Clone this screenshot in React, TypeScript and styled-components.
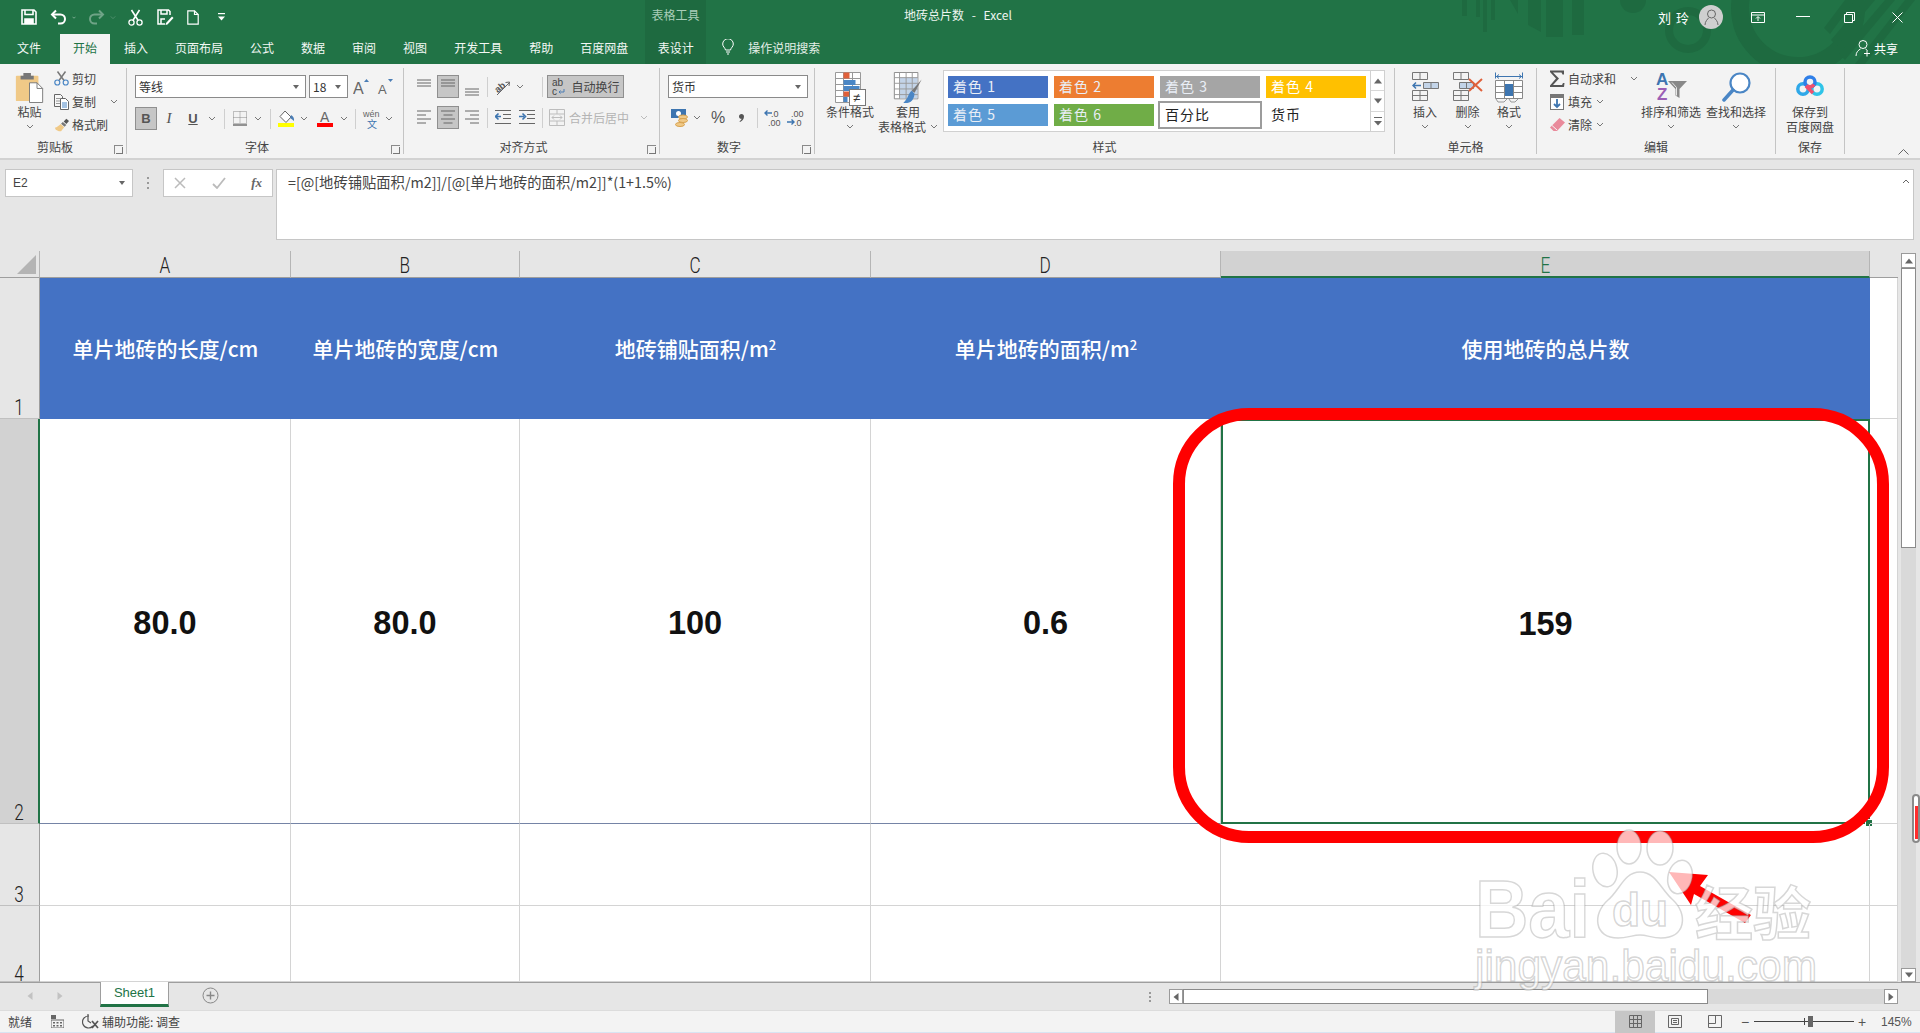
import React from 'react';
import styled, { createGlobalStyle } from 'styled-components';

const GlobalStyle = createGlobalStyle`
  html, body { margin: 0; padding: 0; background: #fff; }
  body { font-family: "Noto Sans CJK SC", "Liberation Sans", sans-serif; font-size: 12px; color: #444; }
  * { box-sizing: border-box; }
  svg { display: block; }
`;

const Page = styled.div`
  position: relative;
  width: 1920px;
  height: 1033px;
  overflow: hidden;
  display: flex;
  flex-direction: column;
  background: #e6e6e6;
`;

/* ---------- title bar and tabs ---------- */

const Header = styled.header`
  position: relative;
  height: 64px;
  background: #217346;
  color: #fff;
`;

const HeaderArt = styled.svg`
  position: absolute;
  left: 0;
  top: 0;
`;

const TitleRow = styled.div`
  position: relative;
  height: 34px;
  display: flex;
  align-items: center;
`;

const QuickAccess = styled.div`
  width: 645px;
  height: 34px;
  padding-left: 13px;
  display: flex;
  align-items: center;
`;

const Slot = styled.span<{ $w: number; $dim?: boolean }>`
  width: ${p => p.$w}px;
  flex: none;
  display: flex;
  align-items: center;
  justify-content: center;
  opacity: ${p => (p.$dim ? 0.35 : 1)};
`;

const ContextLabel = styled.div`
  width: 61px;
  height: 34px;
  line-height: 30px;
  text-align: center;
  background: #1e6a40;
  color: #a9cdb9;
  font-size: 12px;
`;

const WindowTitle = styled.div`
  padding-left: 198px;
  flex: 1;
  font-size: 12px;
  line-height: 30px;
  height: 34px;
  word-spacing: 5px;
  color: #eef5f0;
`;

const WindowControls = styled.div`
  display: flex;
  align-items: center;
  height: 34px;
  padding-right: 17px;
`;

const UserName = styled.span`
  font-size: 13px;
  letter-spacing: 1px;
  margin-right: 9px;
`;

const Avatar = styled.span`
  width: 24px;
  height: 24px;
  border-radius: 50%;
  background: #cfcfcf;
  display: flex;
  align-items: center;
  justify-content: center;
  margin-right: 28px;
`;

const TabRow = styled.nav`
  position: relative;
  height: 30px;
  display: flex;
  align-items: stretch;
  padding-left: 4px;
`;

const Tab = styled.div<{ $active?: boolean; $gap?: number }>`
  padding: 0 13px;
  margin-right: ${p => p.$gap ?? 1}px;
  line-height: 28px;
  font-size: 12px;
  white-space: nowrap;
  background: ${p => (p.$active ? '#f3f3f3' : 'transparent')};
  color: ${p => (p.$active ? '#217346' : '#f3f8f5')};
`;

const ContextTab = styled.div`
  width: 61px;
  margin-left: 3px;
  line-height: 28px;
  text-align: center;
  background: #1e6a40;
  color: #f3f8f5;
`;

const SearchHint = styled.div`
  display: flex;
  align-items: center;
  height: 26px;
  margin-left: 16px;
  gap: 14px;
  color: #e4efe8;
`;

const ShareButton = styled.div`
  position: absolute;
  right: 22px;
  top: 0;
  height: 28px;
  display: flex;
  align-items: center;
  gap: 3px;
  color: #fff;
`;

/* ---------- ribbon ---------- */

const Ribbon = styled.section`
  position: relative;
  height: 96px;
  padding-top: 4px;
  display: flex;
  background: #f3f3f3;
  border-bottom: 2px solid #d2d2d2;
`;

const Group = styled.div<{ $w: number; $end?: boolean }>`
  position: relative;
  width: ${p => p.$w}px;
  height: 86px;
  display: flex;
  flex-direction: column;
  border-right: ${p => (p.$end ? 'none' : '1px solid #c4c4c4')};
`;

const GroupBody = styled.div<{ $pad?: number; $column?: boolean; $top?: number }>`
  height: 70px;
  padding-left: ${p => p.$pad ?? 0}px;
  padding-top: ${p => p.$top ?? 0}px;
  display: flex;
  flex-direction: ${p => (p.$column ? 'column' : 'row')};
`;

const GroupLabel = styled.div<{ $launcher?: boolean }>`
  height: 16px;
  line-height: 17px;
  text-align: center;
  font-size: 12px;
  color: #444;
  padding-right: ${p => (p.$launcher ? 16 : 0)}px;
`;

const Launcher = styled.span`
  position: absolute;
  right: 3px;
  bottom: 0;
  width: 9px;
  height: 9px;
  border-left: 1px solid #8a8a8a;
  border-top: 1px solid #8a8a8a;
  &::after {
    content: '';
    position: absolute;
    left: 1px;
    top: 1px;
    width: 6px;
    height: 6px;
    border-right: 1px solid #777;
    border-bottom: 1px solid #777;
  }
`;

const ToolRow = styled.div<{ $mt?: number; $h?: number }>`
  height: ${p => p.$h ?? 23}px;
  margin-top: ${p => p.$mt ?? 0}px;
  display: flex;
  align-items: center;
  color: #444;
  white-space: nowrap;
`;

const PressedButton = styled.span<{ $w: number; $ml?: number }>`
  width: ${p => p.$w}px;
  height: 23px;
  flex: none;
  margin-left: ${p => p.$ml ?? 0}px;
  display: flex;
  align-items: center;
  justify-content: center;
  gap: 5px;
  background: #c6c6c6;
  border: 1px solid #8f8f8f;
  color: #444;
`;

const Separator = styled.span`
  width: 1px;
  height: 20px;
  flex: none;
  background: #cfcfcf;
`;

const ComboBox = styled.div<{ $w: number; $ml?: number }>`
  width: ${p => p.$w}px;
  height: 23px;
  flex: none;
  margin-left: ${p => p.$ml ?? 0}px;
  padding: 0 6px 0 3px;
  display: flex;
  align-items: center;
  justify-content: space-between;
  background: #fff;
  border: 1px solid #8a8a8a;
  font-size: 12px;
  color: #333;
`;

const DownCaret = styled.span`
  width: 0;
  height: 0;
  border-left: 3.5px solid transparent;
  border-right: 3.5px solid transparent;
  border-top: 4px solid #666;
`;

const BigButton = styled.div<{ $w: number; $ml?: number }>`
  width: ${p => p.$w}px;
  flex: none;
  margin-left: ${p => p.$ml ?? 0}px;
  display: flex;
  flex-direction: column;
  align-items: center;
  color: #444;
`;

const BigIcon = styled.div<{ $top?: number }>`
  height: 36px;
  padding-top: ${p => p.$top ?? 4}px;
  display: flex;
  align-items: flex-start;
  justify-content: center;
`;

const BigLine = styled.div`
  height: 15px;
  line-height: 15px;
  display: flex;
  align-items: center;
  gap: 4px;
  white-space: nowrap;
`;

const ToolColumn = styled.div<{ $w: number; $ml?: number }>`
  width: ${p => p.$w}px;
  flex: none;
  margin-left: ${p => p.$ml ?? 0}px;
  margin-top: -1px;
  display: flex;
  flex-direction: column;
`;

const DimText = styled.span`
  color: #b4b4b4;
  margin-left: 4px;
  width: 60px;
`;

const Glyph = styled.span<{ $italic?: boolean; $under?: boolean; $size?: number; $serif?: boolean }>`
  font-family: ${p => (p.$serif ? '"Liberation Serif"' : '"Liberation Sans"')}, sans-serif;
  font-size: ${p => p.$size ?? 14}px;
  font-style: ${p => (p.$italic ? 'italic' : 'normal')};
  font-weight: ${p => (p.$under ? 700 : 400)};
  text-decoration: ${p => (p.$under ? 'underline' : 'none')};
  color: #555;
`;

const Gallery = styled.div`
  width: 428px;
  height: 62px;
  margin: 2px 0 0 12px;
  padding: 5px 4px;
  display: grid;
  grid-template-columns: repeat(4, 100px);
  grid-auto-rows: 22px;
  gap: 6px;
  background: #fff;
  border: 1px solid #d0d0d0;
`;

const StyleCell = styled.div<{ $bg?: string; $fg?: string; $framed?: boolean }>`
  background: ${p => p.$bg ?? 'transparent'};
  color: ${p => p.$fg ?? '#e9eef6'};
  font-size: 14px;
  line-height: 20px;
  padding-left: 5px;
  letter-spacing: 1px;
  white-space: nowrap;
  ${p => p.$framed && `
    color: #222;
    margin: -3px -2px;
    line-height: 22px;
    border: 2px solid #9c9c9c;
    box-shadow: inset 0 0 0 1px #fff;
    padding-left: 5px;
  `}
`;

const GalleryScroll = styled.div`
  width: 14px;
  height: 62px;
  margin-top: 2px;
  display: flex;
  flex-direction: column;
  background: #fff;
  border: 1px solid #d0d0d0;
  border-left: none;
`;

const GalleryArrow = styled.div`
  flex: 1;
  display: flex;
  align-items: center;
  justify-content: center;
  border-bottom: 1px solid #d8d8d8;
  &:last-child { border-bottom: none; }
`;

const CollapseRibbon = styled.span`
  position: absolute;
  right: 11px;
  bottom: 3px;
`;

/* ---------- formula bar ---------- */

const FormulaBar = styled.section`
  height: 91px;
  padding: 9px 6px 0 5px;
  display: flex;
  align-items: flex-start;
  background: #e6e6e6;
`;

const NameBox = styled.div`
  width: 128px;
  height: 28px;
  padding: 0 7px;
  display: flex;
  align-items: center;
  justify-content: space-between;
  background: #fff;
  border: 1px solid #c6c6c6;
  font-family: "Liberation Sans", sans-serif;
  font-size: 12px;
  color: #444;
`;

const BarDots = styled.div`
  width: 30px;
  height: 28px;
  display: flex;
  flex-direction: column;
  align-items: center;
  justify-content: center;
  gap: 3px;
  & > i { width: 2px; height: 2px; background: #999; }
`;

const FxBox = styled.div`
  width: 110px;
  height: 28px;
  padding: 0 10px;
  display: flex;
  align-items: center;
  justify-content: space-between;
  background: #fff;
  border: 1px solid #c6c6c6;
`;

const FxLabel = styled.span`
  font-family: "Liberation Serif", serif;
  font-style: italic;
  font-weight: 700;
  font-size: 13px;
  color: #666;
`;

const FormulaInput = styled.div`
  position: relative;
  flex: 1;
  margin-left: 3px;
  height: 71px;
  padding: 3px 11px;
  background: #fff;
  border: 1px solid #c6c6c6;
  font-size: 14.3px;
  line-height: 18px;
  color: #444;
  & > svg { position: absolute; right: 3px; top: 9px; }
`;

/* ---------- sheet ---------- */

const Workspace = styled.section`
  display: flex;
  height: 731px;
`;

const SheetGrid = styled.div`
  width: 1898px;
  display: grid;
  grid-template-columns: 40px 251px 229px 351px 350px 649px 28px;
  grid-template-rows: 27px 141px 405px 82px 76px;
  background: #fff;
  border-right: 1px solid #9e9e9e;
`;

const Corner = styled.div`
  background: #e6e6e6;
  border-right: 1px solid #b5b5b5;
  border-bottom: 1px solid #9e9e9e;
  padding: 4px 0 0 17px;
`;

const HeadLetter = styled.span<{ $drop?: number }>`
  display: inline-block;
  font-family: "Roboto", sans-serif;
  font-weight: 300;
  font-size: 22px;
  line-height: 20px;
  transform: translateY(${p => p.$drop ?? 0}px) scaleX(0.78);
`;

const ColHead = styled.div<{ $selected?: boolean; $plain?: boolean }>`
  display: flex;
  align-items: center;
  justify-content: center;
  padding-top: 4px;
  color: ${p => (p.$selected ? '#217346' : '#222')};
  background: ${p => (p.$selected ? '#d2d2d2' : '#e6e6e6')};
  border-right: ${p => (p.$plain ? 'none' : '1px solid #b5b5b5')};
  border-bottom: ${p => (p.$selected ? '2px solid #217346' : '1px solid #9e9e9e')};
`;

const RowHead = styled.div<{ $selected?: boolean }>`
  display: flex;
  align-items: flex-end;
  justify-content: center;
  color: #222;
  background: ${p => (p.$selected ? '#d2d2d2' : '#e6e6e6')};
  border-right: ${p => (p.$selected ? '2px solid #217346' : '1px solid #9e9e9e')};
  border-bottom: 1px solid #c0c0c0;
`;

const TableHead = styled.div`
  display: flex;
  align-items: center;
  justify-content: center;
  padding-bottom: 2px;
  background: #4472c4;
  color: #fff;
  font-size: 21px;
  font-weight: 500;
  white-space: nowrap;
  & sup { font-size: 13px; line-height: 0; position: relative; top: -3px; }
`;

const Cell = styled.div<{ $tableEnd?: boolean }>`
  position: relative;
  display: flex;
  align-items: center;
  justify-content: center;
  padding-top: 5px;
  border-right: 1px solid #d4d4d4;
  border-bottom: 1px solid ${p => (p.$tableEnd ? '#7584a6' : '#d4d4d4')};
  font-family: "Liberation Sans", sans-serif;
  font-weight: 700;
  font-size: 32.5px;
  color: #111;
`;

const ActiveCell = styled(Cell)`
  border: 2px solid #217346;
`;

const FillHandle = styled.span`
  position: absolute;
  right: -5px;
  bottom: -5px;
  width: 8px;
  height: 8px;
  background: #217346;
  border: 1px solid #fff;
`;

const VScroll = styled.div`
  width: 22px;
  padding: 2px 2px 0 3px;
  display: flex;
  flex-direction: column;
  background: #e6e6e6;
`;

const ScrollButton = styled.div<{ $w?: number; $h?: number }>`
  width: ${p => p.$w ?? 15}px;
  height: ${p => p.$h ?? 15}px;
  flex: none;
  display: flex;
  align-items: center;
  justify-content: center;
  background: #fff;
  border: 1px solid #9a9a9a;
`;

const VThumb = styled.div`
  width: 15px;
  height: 280px;
  flex: none;
  background: #fff;
  border: 1px solid #8a8a8a;
`;

const VTrack = styled.div`
  flex: 1;
  width: 15px;
  background: #d9d9d9;
`;

const SheetBar = styled.section`
  height: 28px;
  display: flex;
  align-items: flex-start;
  background: #e6e6e6;
  border-top: 1px solid #9e9e9e;
`;

const TabNav = styled.div`
  width: 100px;
  height: 26px;
  padding-left: 26px;
  display: flex;
  align-items: center;
  gap: 22px;
`;

const SheetTab = styled.div`
  width: 69px;
  height: 25px;
  margin-top: -1px;
  text-align: center;
  line-height: 22px;
  font-family: "Liberation Sans", sans-serif;
  font-size: 13px;
  color: #217346;
  background: #fff;
  border-left: 1px solid #9e9e9e;
  border-right: 1px solid #9e9e9e;
  border-bottom: 3px solid #217346;
`;

const AddSheet = styled.div`
  margin: 4px 0 0 33px;
`;

const HScrollArea = styled.div`
  margin-left: auto;
  width: 767px;
  height: 15px;
  margin-top: 6px;
  margin-right: 22px;
  display: flex;
  align-items: center;
`;

const HDots = styled(BarDots)`
  width: 38px;
  height: 15px;
  gap: 2px;
`;

const HThumb = styled.div`
  width: 525px;
  height: 15px;
  background: #fff;
  border: 1px solid #8a8a8a;
`;

const HTrack = styled.div`
  flex: 1;
  height: 15px;
  background: #d9d9d9;
`;

const StatusBar = styled.footer`
  height: 23px;
  padding-left: 8px;
  display: flex;
  align-items: center;
  background: #f3f3f3;
  border-top: 1px solid #dcdcdc;
  border-bottom: 1px solid #d8e4f2;
  color: #444;
  white-space: nowrap;
`;

const StatusRight = styled.div`
  margin-left: auto;
  display: flex;
  align-items: center;
  height: 22px;
`;

const ViewButton = styled.div<{ $active?: boolean }>`
  width: 40px;
  height: 22px;
  display: flex;
  align-items: center;
  justify-content: center;
  background: ${p => (p.$active ? '#c6c6c6' : 'transparent')};
`;

const ZoomTrack = styled.div`
  position: relative;
  width: 100px;
  height: 1px;
  margin: 0 2px 0 3px;
  background: #444;
  & > i { position: absolute; left: 50px; top: -3px; width: 1px; height: 7px; background: #444; }
  & > b { position: absolute; left: 54px; top: -5px; width: 5px; height: 11px; background: #666; }
`;

const ZoomSign = styled.span`
  width: 12px;
  text-align: center;
  font-family: "Liberation Sans", sans-serif;
  font-size: 14px;
  color: #555;
`;

const ZoomValue = styled.span`
  width: 52px;
  padding-left: 13px;
  font-family: "Liberation Sans", sans-serif;
  font-size: 12px;
  color: #555;
`;

/* ---------- things drawn over the sheet ---------- */

const RedFrame = styled.div`
  position: absolute;
  left: 1173px;
  top: 408px;
  width: 716px;
  height: 435px;
  border: 12px solid #ff0000;
  border-radius: 76px;
  pointer-events: none;
`;

const ScrollMark = styled.div`
  position: absolute;
  left: 1912px;
  top: 794px;
  width: 8px;
  height: 49px;
  padding: 10px 0.5px 2px;
  background: #fff;
  border: 2px solid #8a8a8a;
  border-radius: 4px;
  &::after {
    content: '';
    display: block;
    height: 100%;
    background: #ff2d2d;
  }
`;

const Overlay = styled.svg`
  position: absolute;
  left: 1460px;
  top: 820px;
  pointer-events: none;
`;

/* ---------- icons ---------- */

const Chev = ({ c = '#777' }: { c?: string }) => (
  <svg width="8" height="5" viewBox="0 0 8 5"><path d="M1 1l3 3 3-3" fill="none" stroke={c} strokeWidth="1" /></svg>
);

const QatSave = () => (
  <svg width="16" height="16" viewBox="0 0 16 16" fill="none" stroke="#fff" strokeWidth="1.6">
    <path d="M1 1h12l2 2v12H1z" /><path d="M4 1v4.5h8V1" /><path d="M4 15v-5h8v5" fill="#fff" />
  </svg>
);
const QatUndo = ({ flip }: { flip?: boolean }) => (
  <svg width="17" height="16" viewBox="0 0 17 16" fill="none" stroke="#fff" strokeWidth="2" transform={flip ? 'scale(-1,1)' : undefined}>
    <path d="M6 1.5 2 5.5l4 4" /><path d="M2.5 5.5h8a4.5 4.5 0 0 1 0 9H8" />
  </svg>
);
const QatCut = () => (
  <svg width="15" height="17" viewBox="0 0 15 17" fill="none" stroke="#fff" strokeWidth="1.3">
    <circle cx="3.5" cy="13.5" r="2.6" /><circle cx="11.5" cy="13.5" r="2.6" />
    <path d="M5 11.3 11.5 1M10 11.3 3.5 1" strokeWidth="1.6" />
  </svg>
);
const QatSaveAs = () => (
  <svg width="17" height="16" viewBox="0 0 17 16" fill="none" stroke="#fff" strokeWidth="1.5">
    <path d="M8 15H1V1h10.5L13 2.5V6" /><path d="M4 1v4h6V1" /><path d="M4 15v-5h4" />
    <path d="M9 14l6-6.5 1.5 1.5-6 6.5-2 .5z" fill="#fff" stroke="none" />
  </svg>
);
const QatNew = () => (
  <svg width="12" height="15" viewBox="0 0 12 15" fill="none" stroke="#fff" strokeWidth="1.2">
    <path d="M.8.8h6.7l3.7 3.7v9.7H.8z" /><path d="M7.5.8v3.7h3.7" />
  </svg>
);
const QatCustomize = () => (
  <svg width="7" height="8" viewBox="0 0 7 8" fill="#fff"><rect x="0" y="0" width="7" height="1.2" /><path d="M0 3.5h7L3.5 7.5z" /></svg>
);

const PasteIcon = () => (
  <svg width="29" height="31" viewBox="0 0 29 33">
    <rect x="0" y="4" width="24" height="27" rx="1" fill="#f0c987" />
    <path d="M8 4V1h8v3h3v4H5V4z" fill="#777" />
    <path d="M14.5 11.5h8l6 6v15h-14z" fill="#fff" stroke="#777" />
    <path d="M22.5 11.5v6h6" fill="none" stroke="#777" />
  </svg>
);
const CutIcon = () => (
  <svg width="15" height="15" viewBox="0 0 15 15" fill="none">
    <path d="M5 9.5 11.5 .5M10 9.5 3.5 .5" stroke="#777" strokeWidth="1.5" />
    <circle cx="3.3" cy="11.5" r="2.5" stroke="#4a86c5" strokeWidth="1.2" />
    <circle cx="11.7" cy="11.5" r="2.5" stroke="#4a86c5" strokeWidth="1.2" />
  </svg>
);
const CopyIcon = () => (
  <svg width="15" height="16" viewBox="0 0 15 16" fill="none" stroke="#666">
    <path d="M.5.5h6l2 2v10H.5z" fill="#f7f7f7" />
    <path d="M2 4.5h4M2 7h4M2 9.5h4" stroke="#999" />
    <path d="M6.5 4.5h5l3 3v8h-8z" fill="#fff" />
    <path d="M8 9h5M8 11h5M8 13h5" stroke="#4a86c5" />
  </svg>
);
const BrushIcon = () => (
  <svg width="17" height="14" viewBox="0 0 17 14">
    <path d="M11 3l3-3 3 2.5-3 3.5z" fill="#555" />
    <path d="M10 3.5l4 3.5-2 2-4-3.5z" fill="#777" />
    <path d="M7.5 6l4 3.5L8 14H5.5L2 12.5 1 10c2.500-.2 4.500-2 6.500-4z" fill="#f0c987" />
  </svg>
);
const GrowIcon = ({ down }: { down?: boolean }) => (
  <svg width="17" height="18" viewBox="0 0 17 18">
    <path d={down ? 'M11 1h5l-2.500 3z' : 'M11 4h5L13.500 1z'} fill="#4a7db5" />
    <text x={down ? 1 : 0} y="16" fontFamily="Liberation Sans" fontSize={down ? 13 : 16} fill="#666">A</text>
  </svg>
);
const BorderIcon = () => (
  <svg width="14" height="15" viewBox="0 0 14 15" fill="none" stroke="#888" strokeDasharray="1 1">
    <path d="M.5.5h13v12H.5zM7 .5v12M.5 6.500h13" />
    <path d="M0 14h14" stroke="#666" strokeDasharray="none" strokeWidth="1.4" />
  </svg>
);
const FillIcon = () => (
  <svg width="17" height="18" viewBox="0 0 17 18">
    <path d="M7 1l6 6-5 5.500-6-6z" fill="#fff" stroke="#666" />
    <path d="M13 5c2 1 3.500 3 3 6-1-1-2.500-2-4-3z" fill="#4a7db5" />
    <rect x="0" y="13" width="16" height="4" fill="#ffff00" />
  </svg>
);
const FontColorIcon = () => (
  <svg width="16" height="18" viewBox="0 0 16 18">
    <text x="3" y="12" fontFamily="Liberation Sans" fontSize="14" fill="#666">A</text>
    <rect x="0" y="13" width="16" height="4" fill="#ff0000" />
  </svg>
);
const PhoneticIcon = () => (
  <svg width="20" height="22" viewBox="0 0 20 22">
    <text x="1" y="9" fontFamily="Liberation Sans" fontSize="9" fill="#666">wén</text>
    <text x="5" y="20" fontFamily="Noto Sans CJK SC" fontSize="10" fill="#3d75b0">文</text>
  </svg>
);
const LinesIcon = ({ kind, w = 14 }: { kind: 'top' | 'mid' | 'bot' | 'left' | 'center' | 'right'; w?: number }) => {
  const paths: Record<string, string> = {
    top: 'M0 1h14M0 4h14M0 7h14',
    mid: 'M0 6h14M0 9h14M0 12h14',
    bot: 'M0 11h14M0 14h14M0 17h14',
    left: 'M0 1h14M0 5h9M0 9h14M0 13h9',
    center: 'M0 1h14M2.500 5h9M0 9h14M2.500 13h9',
    right: 'M0 1h14M5 5h9M0 9h14M5 13h9',
  };
  return (
    <svg width={w} height={kind === 'bot' ? 18 : 15} viewBox={`0 0 14 ${kind === 'bot' ? 18 : 15}`}>
      <path d={paths[kind]} stroke="#666" strokeWidth="1" fill="none" />
    </svg>
  );
};
const OrientIcon = () => (
  <svg width="20" height="20" viewBox="0 0 20 20">
    <text x="2" y="14" fontFamily="Liberation Sans" fontSize="9.500" fontWeight="700" fill="#555" transform="rotate(-40 7 10)">ab</text>
    <path d="M5 18 17 6M13.500 5.500 17.500 5l-.5 4" fill="none" stroke="#666" />
  </svg>
);
const WrapIcon = () => (
  <svg width="15" height="21" viewBox="0 0 15 21">
    <text x="1" y="10" fontFamily="Liberation Sans" fontSize="10" fill="#444">ab</text>
    <text x="1" y="19" fontFamily="Liberation Sans" fontSize="10" fill="#444">c</text>
    <path d="M13 13v3H8M9.500 14.500 8 16l1.500 1.500" fill="none" stroke="#4a7db5" />
  </svg>
);
const IndentIcon = ({ inward }: { inward?: boolean }) => (
  <svg width="16" height="15" viewBox="0 0 16 15">
    <path d="M0 .5h16M8 4.500h8M8 8.500h8M0 13.500h16" stroke="#666" fill="none" />
    <path d={inward ? 'M0 6.500h5M3.500 3.500l3 3-3 3' : 'M6 6.500H1M3.500 3.500l-3 3 3 3'} stroke="#3d75b0" strokeWidth="1.6" fill="none" />
  </svg>
);
const MergeIcon = () => (
  <svg width="16" height="17" viewBox="0 0 16 17" fill="none" stroke="#bdbdbd">
    <path d="M.5.5h15v16H.5zM.5 5h15M.5 12h15M8 .5V5M8 12v4.500" />
    <path d="M3 8.500h10M5 6.500l-2 2 2 2M11 6.500l2 2-2 2" />
  </svg>
);
const CurrencyIcon = () => (
  <svg width="18" height="20" viewBox="0 0 18 20">
    <rect x="0" y="1" width="15" height="9" fill="#3d75b0" />
    <circle cx="7.500" cy="5.500" r="2.500" fill="#fff" />
    <ellipse cx="12" cy="9" rx="4.500" ry="2" fill="#f0c987" stroke="#d8a24f" />
    <ellipse cx="12" cy="12.500" rx="4.500" ry="2" fill="#f0c987" stroke="#d8a24f" />
    <ellipse cx="9" cy="16.500" rx="4.500" ry="2" fill="#f0c987" stroke="#d8a24f" />
  </svg>
);
const CommaIcon = () => (
  <svg width="5" height="8" viewBox="0 0 5 8"><path d="M2.500 0C4 0 5 1 5 2.500 5 5 3.500 7 1 8L.5 7.300C2 6.500 2.500 5.500 2.500 4.800 1 4.800 0 3.800 0 2.400 0 1 1 0 2.500 0z" fill="#555" /></svg>
);
const DecimalIcon = ({ more }: { more?: boolean }) => (
  <svg width="18" height="18" viewBox="0 0 18 18">
    <text x={more ? 4 : 7} y="7.500" fontFamily="Liberation Sans" fontSize="9" fill="#555">{more ? '.00' : '.0'}</text>
    <text x={more ? 7 : 4} y="16.500" fontFamily="Liberation Sans" fontSize="9" fill="#555">{more ? '.0' : '.00'}</text>
    <path d={more ? 'M0 13h7M4.500 10.500 7 13l-2.500 2.500' : 'M8 4H1M3.500 1.500 1 4l2.500 2.500'} fill="none" stroke="#3d75b0" strokeWidth="1.4" />
  </svg>
);
const CondFormatIcon = () => (
  <svg width="31" height="34" viewBox="0 0 31 34">
    <path d="M.5.5h25v30H.5zM8.500.5v30M17.500.5v30M.5 6.500h25M.5 12.500h25M.5 18.500h25M.5 24.500h25" fill="#fff" stroke="#999" />
    <rect x="8.500" y=".5" width="6" height="6" fill="#e0603a" />
    <rect x="8.500" y="8" width="12" height="5" fill="#4a86c5" />
    <rect x="8.500" y="14" width="16" height="5" fill="#4a86c5" />
    <rect x="8.500" y="19.500" width="8" height="5" fill="#e0603a" />
    <rect x="8.500" y="25" width="4" height="5" fill="#4a86c5" />
    <rect x="14.500" y="17.500" width="16" height="16" fill="#fff" stroke="#777" />
    <text x="18" y="30" fontFamily="Liberation Sans" fontSize="13" fill="#333">≠</text>
  </svg>
);
const TableFormatIcon = () => (
  <svg width="30" height="32" viewBox="0 0 30 34">
    <path d="M.5.5h25v28H.5z" fill="#fff" stroke="#888" />
    <rect x="6" y="6" width="19" height="22" fill="#c3d4e8" />
    <path d="M.5 6h25M.5 12h25M.5 18h25M.5 24h25M6 .5v28M13 .5v28M19.500 .5v28" stroke="#999" fill="none" />
    <path d="M29.500 8 22 22l-3-2z" fill="#777" />
    <path d="M19 20c-4 3-3 7-9 13 6 0 11-1 12-10z" fill="#4a86c5" />
  </svg>
);
const InsertIcon = () => (
  <svg width="27" height="29" viewBox="0 0 27 29" fill="none" stroke="#777">
    <path d="M.5.5h15v7H.5zM8 .5v7M.5 18.500h15v10H.5zM8 18.500v10M.5 23.500h15" />
    <path d="M11.500 10.500h15v6h-15zM19 10.500v6" fill="#c3d4e8" />
    <path d="M9 13.500H1M4 10.500l-3 3 3 3" stroke="#3d75b0" strokeWidth="1.5" />
  </svg>
);
const DeleteIcon = () => (
  <svg width="30" height="29" viewBox="0 0 30 29" fill="none" stroke="#777">
    <path d="M.5.5h15v7H.5zM8 .5v7M.5 18.500h15v10H.5zM8 18.500v10M.5 23.500h15" />
    <path d="M6.500 10.500h14v6h-14zM13.500 10.500v6" fill="#c3d4e8" />
    <path d="M16 7l13 12M29 7 16 19" stroke="#e0603a" strokeWidth="2" />
  </svg>
);
const CellFormatIcon = () => (
  <svg width="28" height="31" viewBox="0 0 28 31" fill="none" stroke="#888">
    <path d="M1 4.500h26M4 2.500l-2.500 2 2.500 2M24 2.500l2.500 2-2.500 2M.5.500v6M27.500.500v6" stroke="#3d75b0" />
    <path d="M.5 8.500h27v18H.5zM.5 14.500h27M.5 20.500h27M9.500 8.500v18M18.500 8.500v18" fill="#fff" />
    <rect x="10" y="12" width="8" height="12" fill="#3d75b0" stroke="none" />
    <path d="M1 27l2 3h6l3-3M14 27l2 3h4l3-3" stroke="#999" />
  </svg>
);
const SigmaIcon = () => (
  <svg width="16" height="17" viewBox="0 0 16 17"><path d="M1 .5h14v4h-1.500l-1-2H4l6 6-6 6.500h9l1-2H15.500l-.5 4H1v-1.500L7 8.500 1 2z" fill="#555" /></svg>
);
const FillDownIcon = () => (
  <svg width="14" height="16" viewBox="0 0 14 16">
    <rect x=".5" y=".5" width="13" height="15" fill="#fff" stroke="#777" />
    <rect x="0" y="0" width="14" height="4" fill="#777" />
    <path d="M7 5v8M4 10l3 3 3-3" stroke="#3d75b0" strokeWidth="1.8" fill="none" />
  </svg>
);
const EraserIcon = () => (
  <svg width="15" height="14" viewBox="0 0 15 14"><path d="M9.500 0 15 4.500 7 13H3.500L0 9.500z" fill="#e98a9b" /><path d="M2 7.500l5 4.500" stroke="#f5f5f5" fill="none" /></svg>
);
const SortIcon = () => (
  <svg width="31" height="30" viewBox="0 0 31 30">
    <text x="0" y="13" fontFamily="Liberation Sans" fontWeight="700" fontSize="17" fill="#3d75b0">A</text>
    <text x="1" y="28" fontFamily="Liberation Sans" fontWeight="700" fontSize="17" fill="#9b5fb5">Z</text>
    <path d="M12 9h19l-7.500 8v9l-4-2.500V17z" fill="#888" />
    <path d="M16 10.500l4.500 5v8" fill="none" stroke="#e8e8e8" />
  </svg>
);
const FindIcon = () => (
  <svg width="29" height="30" viewBox="0 0 29 30" fill="none" stroke="#4a86c5">
    <circle cx="18" cy="11" r="9.500" strokeWidth="2.200" fill="#fff" />
    <path d="M11 18 2 28" strokeWidth="3.500" strokeLinecap="round" />
  </svg>
);
const CloudIcon = () => (
  <svg width="28" height="22" viewBox="0 0 28 22" fill="none" strokeWidth="3.500">
    <circle cx="7" cy="14" r="5.200" stroke="#2fa8e8" />
    <circle cx="21" cy="14" r="5.200" stroke="#2fc4e8" />
    <circle cx="14" cy="7" r="5" stroke="#2f7fe8" />
    <path d="M10 11l7 7" stroke="#f0506e" />
    <path d="M18 9.500a5 5 0 0 1-7.500 1" stroke="#f0506e" />
  </svg>
);
const Triangle = ({ dir, c = '#666' }: { dir: 'up' | 'down' | 'left' | 'right'; c?: string }) => {
  const d = { up: 'M0 5h8L4 0z', down: 'M0 0h8L4 5z', left: 'M5 0v8L0 4z', right: 'M0 0v8l5-4z' }[dir];
  return <svg width="8" height="8" viewBox="0 0 8 8"><path d={d} fill={c} transform={dir === 'up' || dir === 'down' ? 'translate(0 1.500)' : 'translate(1.500 0)'} /></svg>;
};
const GalleryMore = () => (
  <svg width="8" height="9" viewBox="0 0 8 9" fill="#666"><rect width="8" height="1" /><path d="M0 4h8L4 8.500z" /></svg>
);

const HeaderDecor = () => (
  <HeaderArt width="1920" height="64" viewBox="0 0 1920 64" fill="#1e6a40">
    <rect x="1462" y="0" width="5" height="16" />
    <rect x="1476" y="0" width="4" height="17" />
    <rect x="1483" y="0" width="4" height="32" />
    <rect x="1491" y="0" width="4" height="20" />
    <path d="M1510 0h8v14zM1528 0h13v32l-13-7zM1546 0h17v37h-17zM1572 0h12v35h-12z" />
    <circle cx="1633" cy="0" r="13" />
    <circle cx="1688" cy="30" r="19" fill="none" stroke="#1e6a40" strokeWidth="8" />
    <circle cx="1798" cy="8" r="58" fill="none" stroke="#1e6a40" strokeWidth="18" />
    <path d="M1845 0h10l-25 34-6-6zM1865 0h10l-38 46-6-6zM1885 0h10l-50 60-6-6zM1905 0h10l-50 64h-10z" />
  </HeaderArt>
);

const Watermark = () => (
  <Overlay width="400" height="190" viewBox="1460 820 400 190">
    <path d="M1669 872 1708 875 1700 886 1751 915 1745 923 1694 894 1691 905z" fill="#ff0000" />
    <g fill="rgba(255,255,255,.72)" stroke="rgba(130,130,130,.32)" strokeWidth="1.500">
      <ellipse cx="1629" cy="847" rx="12" ry="17" />
      <ellipse cx="1660" cy="848" rx="13" ry="17" />
      <ellipse cx="1605" cy="870" rx="12" ry="17" transform="rotate(-12 1605 870)" />
      <ellipse cx="1680" cy="877" rx="12" ry="17" transform="rotate(14 1680 877)" />
      <path d="M1640 872c16 0 21 18 33 28 15 14 13 38-12 38-9 0-14-3-21-3s-13 3-22 3c-24 0-26-24-10-38 12-10 16-28 32-28z" />
      <text x="1475" y="937" fontFamily="Liberation Sans" fontWeight="700" fontSize="82" textLength="115" lengthAdjust="spacingAndGlyphs">Bai</text>
      <text x="1695" y="935" fontFamily="Noto Sans CJK SC" fontWeight="700" fontSize="58">经验</text>
      <text x="1475" y="981" fontFamily="Liberation Sans" fontSize="44" textLength="342" lengthAdjust="spacingAndGlyphs">jingyan.baidu.com</text>
      <text x="1612" y="926" fontFamily="Liberation Sans" fontWeight="700" fontSize="46" fill="rgba(255,255,255,.6)">du</text>
    </g>
  </Overlay>
);

const tabs = ['插入', '页面布局', '公式', '数据', '审阅', '视图', '开发工具', '帮助', '百度网盘'];

const galleryStyles = [
  { label: '着色 1', bg: '#4472c4' },
  { label: '着色 2', bg: '#ed7d31' },
  { label: '着色 3', bg: '#a5a5a5' },
  { label: '着色 4', bg: '#ffc000', fg: '#fff' },
  { label: '着色 5', bg: '#5b9bd5' },
  { label: '着色 6', bg: '#70ad47' },
  { label: '百分比', framed: true },
  { label: '货币', fg: '#222' },
];

const App = () => {
  return (
    <Page>
      <GlobalStyle />
      <Header>
        <HeaderDecor />
        <TitleRow>
          <QuickAccess>
            <Slot $w={31}><QatSave /></Slot>
            <Slot $w={28}><QatUndo /></Slot>
            <Slot $w={4}><Chev c="#cfe0d6" /></Slot>
            <Slot $w={7} />
            <Slot $w={27} $dim><QatUndo flip /></Slot>
            <Slot $w={6} $dim><Chev c="#cfe0d6" /></Slot>
            <Slot $w={39}><QatCut /></Slot>
            <Slot $w={20}><QatSaveAs /></Slot>
            <Slot $w={35}><QatNew /></Slot>
            <Slot $w={22}><QatCustomize /></Slot>
          </QuickAccess>
          <ContextLabel>表格工具</ContextLabel>
          <WindowTitle>地砖总片数 - Excel</WindowTitle>
          <WindowControls>
            <UserName>刘 玲</UserName>
            <Avatar>
              <svg width="15" height="16" viewBox="0 0 15 16" fill="none" stroke="#666"><circle cx="7.500" cy="5" r="4" /><path d="M1 16c0-4 3-6 3.500-7M14 16c0-4-3-6-3.500-7" /></svg>
            </Avatar>
            <Slot $w={14}>
              <svg width="14" height="11" viewBox="0 0 14 11" fill="none" stroke="#fff"><path d="M.5.5h13v10H.5zM.5 3h13" /><path d="M7 9V5M5 6.500 7 4.500l2 2" /></svg>
            </Slot>
            <Slot $w={30} />
            <Slot $w={16}><svg width="14" height="2" viewBox="0 0 14 2"><rect width="14" height="1" fill="#fff" /></svg></Slot>
            <Slot $w={32} />
            <Slot $w={12}>
              <svg width="11" height="11" viewBox="0 0 11 11" fill="none" stroke="#fff"><path d="M.5 2.500h8v8h-8zM2.500 2.500v-2h8v8h-2" /></svg>
            </Slot>
            <Slot $w={36} />
            <Slot $w={12}><svg width="11" height="11" viewBox="0 0 11 11" stroke="#fff"><path d="M.5.5l10 10M10.500.5l-10 10" /></svg></Slot>
          </WindowControls>
        </TitleRow>
        <TabRow>
          <Tab $gap={6}>文件</Tab>
          <Tab $active>开始</Tab>
          {tabs.map(t => <Tab key={t}>{t}</Tab>)}
          <ContextTab>表设计</ContextTab>
          <SearchHint>
            <svg width="12" height="16" viewBox="0 0 12 16" fill="none" stroke="#fff"><path d="M3.500 11C3 8.500.7 7.800.7 5a5.300 5.300 0 0 1 10.600 0c0 2.800-2.300 3.500-2.800 6zM4 13h4M5 15h2" /></svg>
            操作说明搜索
          </SearchHint>
          <ShareButton>
            <svg width="16" height="18" viewBox="0 0 16 18" fill="none" stroke="#fff"><circle cx="8" cy="5.500" r="4" /><path d="M1 17c0-4 2.500-6 4.500-7M10.500 10l2 1.500M9 14.500h6M12 11.500v6" /></svg>
            共享
          </ShareButton>
        </TabRow>
      </Header>

      <Ribbon>
        <Group $w={127}>
          <GroupBody $pad={5}>
            <BigButton $w={49}>
              <BigIcon><PasteIcon /></BigIcon>
              <BigLine>粘贴</BigLine>
              <BigLine><Chev /></BigLine>
            </BigButton>
            <ToolColumn $w={70}>
              <ToolRow><Slot $w={15}><CutIcon /></Slot><Slot $w={3} />剪切</ToolRow>
              <ToolRow><Slot $w={15}><CopyIcon /></Slot><Slot $w={3} />复制<Slot $w={7} /><Slot $w={21}><Chev /></Slot></ToolRow>
              <ToolRow><Slot $w={15}><BrushIcon /></Slot><Slot $w={3} />格式刷</ToolRow>
            </ToolColumn>
          </GroupBody>
          <GroupLabel $launcher>剪贴板</GroupLabel>
          <Launcher />
        </Group>

        <Group $w={277}>
          <GroupBody $pad={8} $column $top={7}>
            <ToolRow>
              <ComboBox $w={171}>等线<DownCaret /></ComboBox>
              <ComboBox $w={39} $ml={3}>18<DownCaret /></ComboBox>
              <Slot $w={27}><GrowIcon /></Slot>
              <Slot $w={20}><GrowIcon down /></Slot>
            </ToolRow>
            <ToolRow $mt={9}>
              <PressedButton $w={22}><Glyph $size={13}><b>B</b></Glyph></PressedButton>
              <Slot $w={24}><Glyph $italic $serif $size={15}>I</Glyph></Slot>
              <Slot $w={24}><Glyph $under $size={13}>U</Glyph></Slot>
              <Slot $w={14}><Chev /></Slot>
              <Slot $w={10}><Separator /></Slot>
              <Slot $w={22}><BorderIcon /></Slot>
              <Slot $w={14}><Chev /></Slot>
              <Slot $w={10}><Separator /></Slot>
              <Slot $w={22}><FillIcon /></Slot>
              <Slot $w={14}><Chev /></Slot>
              <Slot $w={28}><FontColorIcon /></Slot>
              <Slot $w={10}><Chev /></Slot>
              <Slot $w={12}><Separator /></Slot>
              <Slot $w={22}><PhoneticIcon /></Slot>
              <Slot $w={12}><Chev /></Slot>
            </ToolRow>
          </GroupBody>
          <GroupLabel $launcher>字体</GroupLabel>
          <Launcher />
        </Group>

        <Group $w={256}>
          <GroupBody $pad={9} $column $top={7}>
            <ToolRow>
              <Slot $w={22}><LinesIcon kind="top" /></Slot>
              <PressedButton $w={22} $ml={2}><LinesIcon kind="top" /></PressedButton>
              <Slot $w={26}><LinesIcon kind="bot" /></Slot>
              <Slot $w={4}><Separator /></Slot>
              <Slot $w={26}><OrientIcon /></Slot>
              <Slot $w={10}><Chev /></Slot>
              <Slot $w={15} />
              <Slot $w={4}><Separator /></Slot>
              <PressedButton $w={77} $ml={3}><WrapIcon />自动换行</PressedButton>
            </ToolRow>
            <ToolRow $mt={8}>
              <Slot $w={22}><LinesIcon kind="left" /></Slot>
              <PressedButton $w={22} $ml={2}><LinesIcon kind="center" /></PressedButton>
              <Slot $w={26}><LinesIcon kind="right" /></Slot>
              <Slot $w={4}><Separator /></Slot>
              <Slot $w={28}><IndentIcon /></Slot>
              <Slot $w={20}><IndentIcon inward /></Slot>
              <Slot $w={3} />
              <Slot $w={4}><Separator /></Slot>
              <Slot $w={5} />
              <MergeIcon />
              <DimText>合并后居中</DimText>
              <Slot $w={30}><Chev c="#bbb" /></Slot>
            </ToolRow>
          </GroupBody>
          <GroupLabel $launcher>对齐方式</GroupLabel>
          <Launcher />
        </Group>

        <Group $w={155}>
          <GroupBody $pad={8} $column $top={7}>
            <ToolRow><ComboBox $w={140}>货币<DownCaret /></ComboBox></ToolRow>
            <ToolRow $mt={8}>
              <Slot $w={24}><CurrencyIcon /></Slot>
              <Slot $w={10}><Chev /></Slot>
              <Slot $w={32}><Glyph $size={16}>%</Glyph></Slot>
              <Slot $w={14}><CommaIcon /></Slot>
              <Slot $w={7} />
              <Slot $w={4}><Separator /></Slot>
              <Slot $w={5} />
              <Slot $w={18}><DecimalIcon /></Slot>
              <Slot $w={5} />
              <Slot $w={18}><DecimalIcon more /></Slot>
            </ToolRow>
          </GroupBody>
          <GroupLabel $launcher>数字</GroupLabel>
          <Launcher />
        </Group>

        <Group $w={580}>
          <GroupBody>
            <BigButton $w={70}>
              <BigIcon><CondFormatIcon /></BigIcon>
              <BigLine>条件格式</BigLine>
              <BigLine><Chev /></BigLine>
            </BigButton>
            <BigButton $w={46}>
              <BigIcon><TableFormatIcon /></BigIcon>
              <BigLine>套用</BigLine>
              <BigLine>表格格式<Chev /></BigLine>
            </BigButton>
            <Gallery>
              {galleryStyles.map(s => (
                <StyleCell key={s.label} $bg={s.bg} $fg={s.fg} $framed={s.framed}>{s.label}</StyleCell>
              ))}
            </Gallery>
            <GalleryScroll>
              <GalleryArrow><Triangle dir="up" /></GalleryArrow>
              <GalleryArrow><Triangle dir="down" /></GalleryArrow>
              <GalleryArrow><GalleryMore /></GalleryArrow>
            </GalleryScroll>
          </GroupBody>
          <GroupLabel>样式</GroupLabel>
        </Group>

        <Group $w={142}>
          <GroupBody $pad={8}>
            <BigButton $w={44}><BigIcon><InsertIcon /></BigIcon><BigLine>插入</BigLine><BigLine><Chev /></BigLine></BigButton>
            <BigButton $w={41}><BigIcon><DeleteIcon /></BigIcon><BigLine>删除</BigLine><BigLine><Chev /></BigLine></BigButton>
            <BigButton $w={42}><BigIcon><CellFormatIcon /></BigIcon><BigLine>格式</BigLine><BigLine><Chev /></BigLine></BigButton>
          </GroupBody>
          <GroupLabel>单元格</GroupLabel>
        </Group>

        <Group $w={239}>
          <GroupBody $pad={12}>
            <ToolColumn $w={92}>
              <ToolRow><Slot $w={16}><SigmaIcon /></Slot><Slot $w={3} />自动求和<Slot $w={14} /><Chev /></ToolRow>
              <ToolRow><Slot $w={16}><FillDownIcon /></Slot><Slot $w={3} />填充<Slot $w={4} /><Chev /></ToolRow>
              <ToolRow><Slot $w={16}><EraserIcon /></Slot><Slot $w={3} />清除<Slot $w={4} /><Chev /></ToolRow>
            </ToolColumn>
            <BigButton $w={60}><BigIcon><SortIcon /></BigIcon><BigLine>排序和筛选</BigLine><BigLine><Chev /></BigLine></BigButton>
            <BigButton $w={60} $ml={5}><BigIcon><FindIcon /></BigIcon><BigLine>查找和选择</BigLine><BigLine><Chev /></BigLine></BigButton>
          </GroupBody>
          <GroupLabel>编辑</GroupLabel>
        </Group>

        <Group $w={69}>
          <GroupBody>
            <BigButton $w={68}>
              <BigIcon $top={7}><CloudIcon /></BigIcon>
              <BigLine>保存到</BigLine>
              <BigLine>百度网盘</BigLine>
            </BigButton>
          </GroupBody>
          <GroupLabel>保存</GroupLabel>
        </Group>

        <CollapseRibbon>
          <svg width="11" height="6" viewBox="0 0 11 6" fill="none" stroke="#666"><path d="M.5 5.500l5-5 5 5" /></svg>
        </CollapseRibbon>
      </Ribbon>

      <FormulaBar>
        <NameBox>E2<DownCaret /></NameBox>
        <BarDots><i /><i /><i /></BarDots>
        <FxBox>
          <svg width="12" height="12" viewBox="0 0 12 12" stroke="#bbb" strokeWidth="1.500"><path d="M1 1l10 10M11 1 1 11" /></svg>
          <svg width="14" height="12" viewBox="0 0 14 12" fill="none" stroke="#bbb" strokeWidth="1.800"><path d="M1 7l4 4 8-10" /></svg>
          <FxLabel>fx</FxLabel>
        </FxBox>
        <FormulaInput>
          =[@[地砖铺贴面积/m2]]/[@[单片地砖的面积/m2]]*(1+1.5%)
          <svg width="8" height="5" viewBox="0 0 8 5" fill="none" stroke="#666"><path d="M1 4l3-3 3 3" /></svg>
        </FormulaInput>
      </FormulaBar>

      <Workspace>
        <SheetGrid>
          <Corner>
            <svg width="19" height="19" viewBox="0 0 19 19"><path d="M19 0v19H0z" fill="#b4b4b4" /></svg>
          </Corner>
          <ColHead><HeadLetter>A</HeadLetter></ColHead>
          <ColHead><HeadLetter>B</HeadLetter></ColHead>
          <ColHead><HeadLetter>C</HeadLetter></ColHead>
          <ColHead><HeadLetter>D</HeadLetter></ColHead>
          <ColHead $selected><HeadLetter>E</HeadLetter></ColHead>
          <ColHead $plain />

          <RowHead><HeadLetter>1</HeadLetter></RowHead>
          <TableHead>单片地砖的长度/cm</TableHead>
          <TableHead>单片地砖的宽度/cm</TableHead>
          <TableHead>地砖铺贴面积/m<sup>2</sup></TableHead>
          <TableHead>单片地砖的面积/m<sup>2</sup></TableHead>
          <TableHead>使用地砖的总片数</TableHead>
          <Cell />

          <RowHead $selected><HeadLetter>2</HeadLetter></RowHead>
          <Cell $tableEnd>80.0</Cell>
          <Cell $tableEnd>80.0</Cell>
          <Cell $tableEnd>100</Cell>
          <Cell $tableEnd>0.6</Cell>
          <ActiveCell>159<FillHandle /></ActiveCell>
          <Cell />

          <RowHead><HeadLetter>3</HeadLetter></RowHead>
          <Cell /><Cell /><Cell /><Cell /><Cell /><Cell />

          <RowHead><HeadLetter $drop={3}>4</HeadLetter></RowHead>
          <Cell /><Cell /><Cell /><Cell /><Cell /><Cell />
        </SheetGrid>
        <VScroll>
          <ScrollButton><Triangle dir="up" /></ScrollButton>
          <VThumb />
          <VTrack />
          <ScrollButton $h={14}><Triangle dir="down" /></ScrollButton>
        </VScroll>
      </Workspace>

      <SheetBar>
        <TabNav>
          <Triangle dir="left" c="#c2c2c2" />
          <Triangle dir="right" c="#c2c2c2" />
        </TabNav>
        <SheetTab>Sheet1</SheetTab>
        <AddSheet>
          <svg width="17" height="17" viewBox="0 0 17 17" fill="none" stroke="#888"><circle cx="8.500" cy="8.500" r="7.500" /><path d="M4.500 8.500h8M8.500 4.500v8" strokeWidth="1.400" /></svg>
        </AddSheet>
        <HScrollArea>
          <HDots><i /><i /><i /></HDots>
          <ScrollButton $w={14}><Triangle dir="left" /></ScrollButton>
          <HThumb />
          <HTrack />
          <ScrollButton $w={14}><Triangle dir="right" /></ScrollButton>
        </HScrollArea>
      </SheetBar>

      <StatusBar>
        就绪
        <Slot $w={19} />
        <svg width="13" height="13" viewBox="0 0 13 13" fill="#666"><rect x="0" y="0" width="5" height="4" /><rect x="0" y="5" width="13" height="8" fill="none" stroke="#666" /><path d="M2 7h2v1.500H2zM5.500 7h2v1.500h-2zM9 7h2v1.500H9zM2 10h2v1.500H2zM5.500 10h2v1.500h-2zM9 10h2v1.500H9z" /></svg>
        <Slot $w={18} />
        <svg width="17" height="15" viewBox="0 0 17 15" fill="none" stroke="#555" strokeWidth="1.200"><path d="M7 2a6 6 0 1 0 4 10" /><path d="M6 0v7l3 2" /><path d="M10 7l6 7M16 7l-6 7" strokeWidth="1.700" /></svg>
        <Slot $w={3} />
        辅助功能: 调查
        <StatusRight>
          <ViewButton $active>
            <svg width="13" height="13" viewBox="0 0 13 13" fill="none" stroke="#666"><path d="M.5.5h12v12H.5zM4.500.5v12M8.500.5v12M.5 4.500h12M.5 8.500h12" /></svg>
          </ViewButton>
          <ViewButton>
            <svg width="14" height="13" viewBox="0 0 14 13" fill="none" stroke="#666"><path d="M.5.5h13v12H.5zM3.500 3.500h7v6h-7zM5 5.500h4M5 7.500h4" /></svg>
          </ViewButton>
          <ViewButton>
            <svg width="14" height="13" viewBox="0 0 14 13" fill="none" stroke="#666"><path d="M.5.5h13v12H.5zM.5 8.500h7V.5" /></svg>
          </ViewButton>
          <Slot $w={4} />
          <ZoomSign>−</ZoomSign>
          <ZoomTrack><i /><b /></ZoomTrack>
          <ZoomSign>+</ZoomSign>
          <ZoomValue>145%</ZoomValue>
        </StatusRight>
      </StatusBar>

      <RedFrame />
      <ScrollMark />
      <Watermark />
    </Page>
  );
};

export default App;
